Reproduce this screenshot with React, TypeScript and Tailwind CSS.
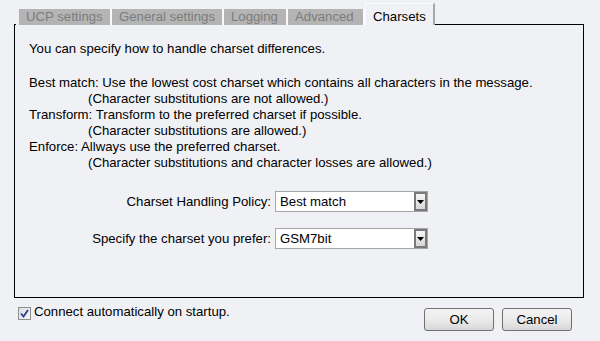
import React from "react";

const font = { fontFamily: '"Liberation Sans", Arial, sans-serif' };

function Tab({ label, w }: { label: string; w: string }) {
  return (
    <div
      className={`${w} h-[16px] bg-[#b4b4b4] border-r-2 border-[#fafafa] text-[#7c7c7c] text-[13.2px] leading-[16px] pl-[7px] whitespace-nowrap overflow-hidden`}
    >
      {label}
    </div>
  );
}

function Select({ value }: { value: string }) {
  return (
    <div className="w-[153px] h-[21px] bg-white border border-[#a5a5a5] flex items-center justify-between">
      <span className="pl-[4px] text-[13.2px] leading-[16px] text-black">{value}</span>
      <div className="w-[13px] h-[19px] border-2 border-[#7a7a7a] bg-gradient-to-b from-[#f6f6f6] to-[#d6d6d6] flex items-center justify-center">
        <svg width="7" height="4" viewBox="0 0 7 4">
          <polygon points="0,0 7,0 3.5,4" fill="#000" />
        </svg>
      </div>
    </div>
  );
}

export default function App() {
  return (
    <div style={font} className="w-[600px] h-[341px] bg-[#f0f1f5] pl-[14px] pt-[3px] text-black">
      <div className="w-[570px]">
        <div className="flex items-end h-[22px]">
          <div className="w-[5px] self-end h-px flex">
            <div className="w-[2px] h-px bg-black" />
          </div>
          <Tab label="UCP settings" w="w-[93px]" />
          <Tab label="General settings" w="w-[112px]" />
          <Tab label="Logging" w="w-[64px]" />
          <Tab label="Advanced" w="w-[77px]" />
          <div className="w-[70px] h-[22px] bg-[#f0f1f5] border-l border-t border-[#fbfbfb] border-r-2 border-r-[#a8a8a8] text-[13.2px] leading-[16px] pt-[5px] pl-[7px] text-black">
            Charsets
          </div>
          <div className="flex-1 h-px bg-black" />
        </div>
        <div className="h-[273px] border-l border-r border-b border-black text-[13.2px] leading-[16px]">
          <div className="pl-[14px] pt-[16px]">
            <div>You can specify how to handle charset differences.</div>
            <div className="mt-[18px]">
              <div>Best match: Use the lowest cost charset which contains all characters in the message.</div>
              <div className="pl-[59px]">(Character substitutions are not allowed.)</div>
              <div>Transform: Transform to the preferred charset if possible.</div>
              <div className="pl-[59px]">(Character substitutions are allowed.)</div>
              <div>Enforce: Allways use the preferred charset.</div>
              <div className="pl-[59px]">(Character substitutions and character losses are allowed.)</div>
            </div>
          </div>
          <div className="mt-[20px] flex flex-col gap-[16px]">
            <div className="flex items-center">
              <div className="w-[256px] text-right">Charset Handling Policy:</div>
              <div className="ml-[4px]">
                <Select value="Best match" />
              </div>
            </div>
            <div className="flex items-center">
              <div className="w-[256px] text-right">Specify the charset you prefer:</div>
              <div className="ml-[4px]">
                <Select value="GSM7bit" />
              </div>
            </div>
          </div>
        </div>
        <div className="flex justify-between items-start pr-[12px]">
          <div className="flex items-center ml-[4px] mt-[9px]">
            <div className="w-[13px] h-[13px] border border-[#8e8f8f] bg-gradient-to-br from-[#dcdde0] to-[#f6f6f6] flex items-center justify-center">
              <svg width="9" height="9" viewBox="0 0 9 9">
                <path d="M1 4.5 L3.5 7.5 L8 1" stroke="#2c3e90" strokeWidth="1.8" fill="none" />
              </svg>
            </div>
            <span className="ml-[3px] text-[13.2px] leading-[16px] -mt-[3px]">Connect automatically on startup.</span>
          </div>
          <div className="flex gap-[8px] mt-[10px]">
            <button className="w-[70px] h-[23px] rounded-[3px] border border-[#707070] bg-gradient-to-b from-[#f3f3f3] via-[#ebebeb] to-[#d7d7d7] text-[13.2px] text-black">
              OK
            </button>
            <button className="w-[70px] h-[23px] rounded-[3px] border border-[#707070] bg-gradient-to-b from-[#f3f3f3] via-[#ebebeb] to-[#d7d7d7] text-[13.2px] text-black">
              Cancel
            </button>
          </div>
        </div>
      </div>
    </div>
  );
}
